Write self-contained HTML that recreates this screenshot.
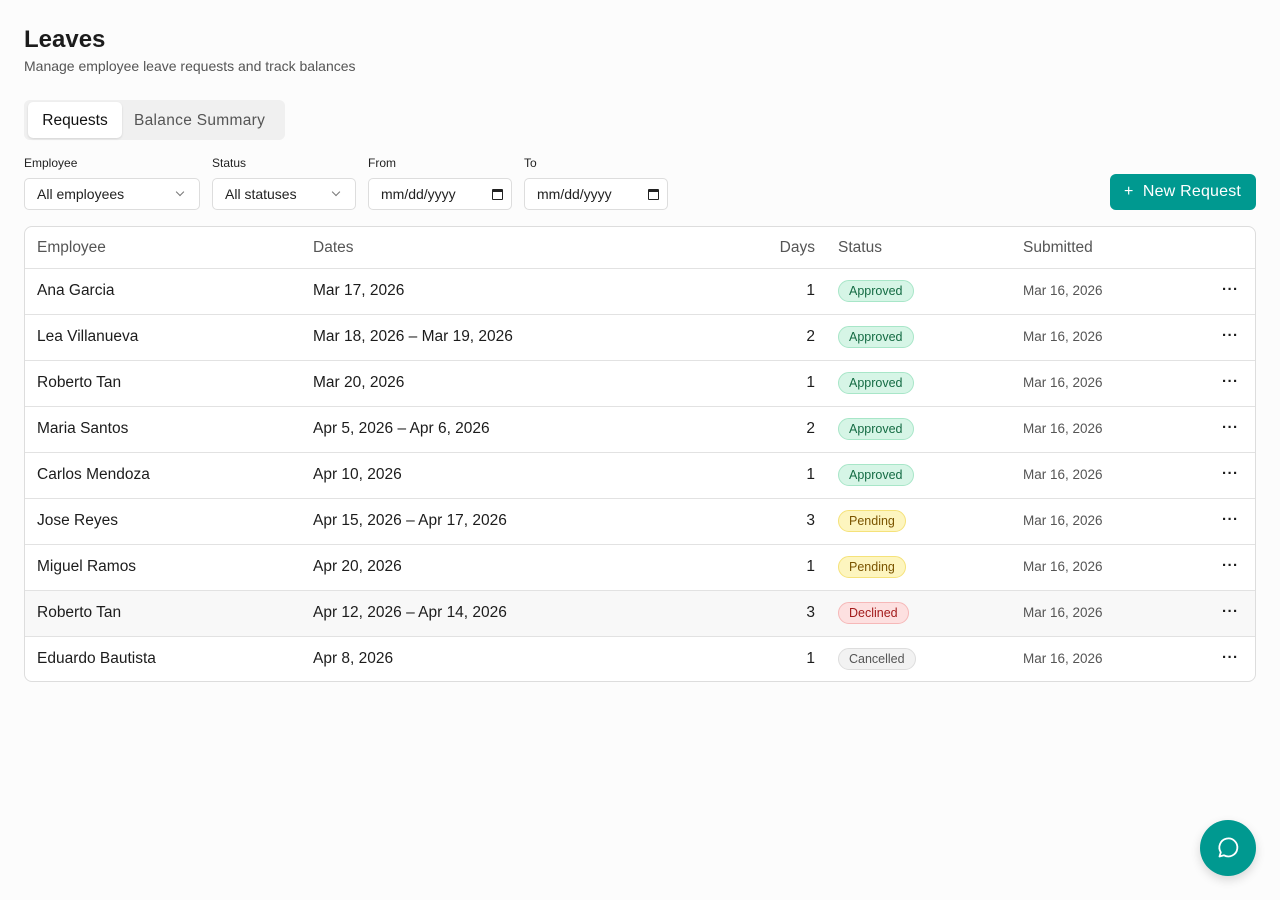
<!DOCTYPE html>
<html><head><style>
*{box-sizing:border-box;margin:0;padding:0}
body{width:1280px;height:900px;background:#fcfcfc;font-family:"Liberation Sans",sans-serif;color:#1a1a1a;position:relative;overflow:hidden}
h1{position:absolute;left:24px;top:26px;font-size:24px;font-weight:700;color:#1c1c1c}
.sub{position:absolute;left:24px;top:58px;font-size:14px;color:#555}
.tabs{position:absolute;left:24px;top:100px;width:261px;height:40px;background:#f0f0f0;border-radius:6px}
.tab{position:absolute;top:2px;height:36px;line-height:37px;font-size:15.5px}
.tab.a{left:4px;width:94px;background:#fff;border-radius:5px;box-shadow:0 1px 2px rgba(0,0,0,.12);text-align:center;color:#111}
.tab.b{left:110px;color:#555;letter-spacing:.3px}
.lbl{position:absolute;top:156px;font-size:12px;color:#222}
.sel{position:absolute;top:178px;height:32px;border:1px solid #ddd;border-radius:5px;background:#fff;font-size:14px;line-height:31px;padding-left:12px;color:#222}
.chev{position:absolute;right:16px;top:10px;width:6px;height:6px;border-right:1.2px solid #777;border-bottom:1.2px solid #777;transform:rotate(45deg)}
.cal{position:absolute;right:8px;top:10px;width:11px;height:11px;border:1.5px solid #222;border-top-width:3px;border-radius:1px}
.btn{position:absolute;left:1110px;top:174px;width:146px;height:36px;background:#009990;border-radius:6px;color:#fff;font-size:16px;line-height:36px;padding-left:14px;letter-spacing:.2px}
.tbl{position:absolute;left:24px;top:226px;width:1232px;height:456px;border:1px solid #ddd;border-radius:8px;background:#fff;overflow:hidden}
.row{position:absolute;left:0;width:1230px;height:46px;border-top:1px solid #e2e2e2;font-size:15.5px;color:#1c1c1c}
.row span{position:absolute;top:0;line-height:44px}
.hd{top:0;height:41px;border-top:none;color:#555}
.hd span{line-height:41px}
.c1{left:12px}.c2{left:288px}.c3{right:440px}.c4{left:813px}.c5{left:998px;font-size:13.5px;color:#555}
.hd .c5{font-size:15.5px}
.pill{top:11px!important;line-height:20px!important;height:22px;padding:0 10px;border-radius:11px;font-size:12.5px;border:1px solid}
.ap{background:#d6f5e6;border-color:#a8e6c8;color:#146b43}
.pe{background:#fdf5bf;border-color:#f5e27a;color:#7a5400}
.de{background:#fde0e0;border-color:#f6b8b8;color:#a31c1c}
.ca{background:#f2f2f2;border-color:#ddd;color:#555}
.dots{left:1197px;font-size:15px;font-weight:700;letter-spacing:0.5px;top:-1px!important}
.fab{position:absolute;left:1200px;top:820px;width:56px;height:56px;border-radius:50%;background:#009990;box-shadow:0 4px 10px rgba(0,0,0,.15)}
</style></head><body>
<h1>Leaves</h1>
<div class="sub">Manage employee leave requests and track balances</div>
<div class="tabs"><div class="tab a">Requests</div><div class="tab b">Balance Summary</div></div>
<div class="lbl" style="left:24px">Employee</div>
<div class="lbl" style="left:212px">Status</div>
<div class="lbl" style="left:368px">From</div>
<div class="lbl" style="left:524px">To</div>
<div class="sel" style="left:24px;width:176px">All employees<i class="chev"></i></div>
<div class="sel" style="left:212px;width:144px">All statuses<i class="chev"></i></div>
<div class="sel" style="left:368px;width:144px">mm/dd/yyyy<i class="cal"></i></div>
<div class="sel" style="left:524px;width:144px">mm/dd/yyyy<i class="cal"></i></div>
<div class="btn">+&nbsp;&nbsp;New Request</div>
<div class="tbl">
<div class="row hd"><span class="c1">Employee</span><span class="c2">Dates</span><span class="c3">Days</span><span class="c4">Status</span><span class="c5">Submitted</span></div>
<div class="row" style="top:41px"><span class="c1">Ana Garcia</span><span class="c2">Mar 17, 2026</span><span class="c3">1</span><span class="c4 pill ap">Approved</span><span class="c5">Mar 16, 2026</span><span class="dots">···</span></div>
<div class="row" style="top:87px"><span class="c1">Lea Villanueva</span><span class="c2">Mar 18, 2026 – Mar 19, 2026</span><span class="c3">2</span><span class="c4 pill ap">Approved</span><span class="c5">Mar 16, 2026</span><span class="dots">···</span></div>
<div class="row" style="top:133px"><span class="c1">Roberto Tan</span><span class="c2">Mar 20, 2026</span><span class="c3">1</span><span class="c4 pill ap">Approved</span><span class="c5">Mar 16, 2026</span><span class="dots">···</span></div>
<div class="row" style="top:179px"><span class="c1">Maria Santos</span><span class="c2">Apr 5, 2026 – Apr 6, 2026</span><span class="c3">2</span><span class="c4 pill ap">Approved</span><span class="c5">Mar 16, 2026</span><span class="dots">···</span></div>
<div class="row" style="top:225px"><span class="c1">Carlos Mendoza</span><span class="c2">Apr 10, 2026</span><span class="c3">1</span><span class="c4 pill ap">Approved</span><span class="c5">Mar 16, 2026</span><span class="dots">···</span></div>
<div class="row" style="top:271px"><span class="c1">Jose Reyes</span><span class="c2">Apr 15, 2026 – Apr 17, 2026</span><span class="c3">3</span><span class="c4 pill pe">Pending</span><span class="c5">Mar 16, 2026</span><span class="dots">···</span></div>
<div class="row" style="top:317px"><span class="c1">Miguel Ramos</span><span class="c2">Apr 20, 2026</span><span class="c3">1</span><span class="c4 pill pe">Pending</span><span class="c5">Mar 16, 2026</span><span class="dots">···</span></div>
<div class="row" style="top:363px;background:#f8f8f8"><span class="c1">Roberto Tan</span><span class="c2">Apr 12, 2026 – Apr 14, 2026</span><span class="c3">3</span><span class="c4 pill de">Declined</span><span class="c5">Mar 16, 2026</span><span class="dots">···</span></div>
<div class="row" style="top:409px"><span class="c1">Eduardo Bautista</span><span class="c2">Apr 8, 2026</span><span class="c3">1</span><span class="c4 pill ca">Cancelled</span><span class="c5">Mar 16, 2026</span><span class="dots">···</span></div>
</div>
<div class="fab"><svg width="56" height="56" viewBox="0 0 56 56"><path d="M19.5 36.5l1.3-4.2A9 9 0 1 1 24 35.3z" fill="none" stroke="#fff" stroke-width="1.8" stroke-linejoin="round"/></svg></div>
</body></html>
